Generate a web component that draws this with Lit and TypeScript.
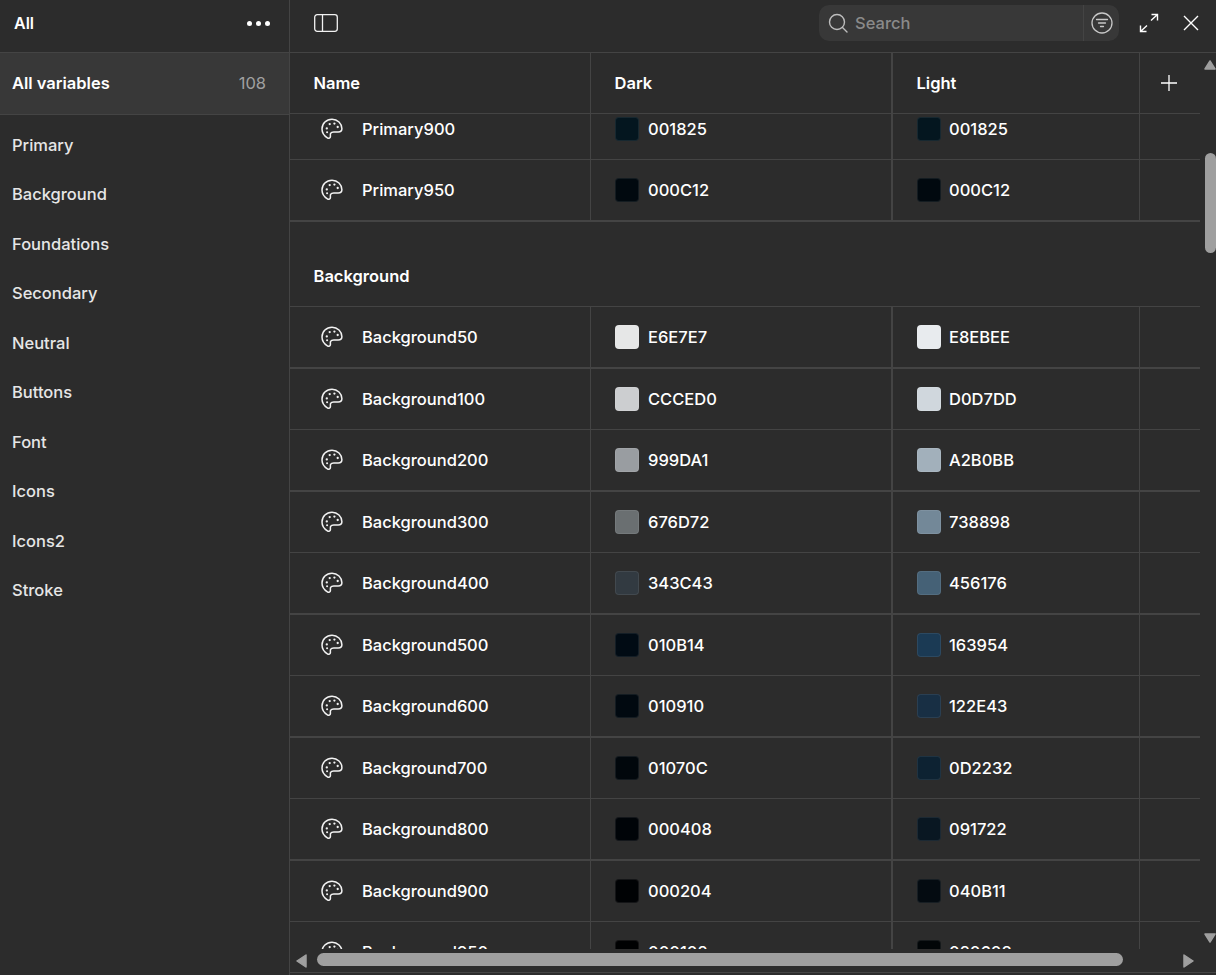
import { LitElement, html, css, svg } from "lit";
import { customElement } from "lit/decorators.js";

const palette = svg`<svg class="pal" width="24" height="24" viewBox="0 0 24 24" fill="none" stroke="#f2f2f2" stroke-width="1.5" stroke-linecap="round" stroke-linejoin="round"><path d="M12 2.2C6.4 2.2 2 6.6 2 12c0 3.600 2.400 7 5.400 8.900 1.400.9 2.900.2 3-1.300.1-1.200-.3-2.300.2-3.300.6-1.100 1.800-1.400 3.200-1.400h4.400c2 0 3.700-1.100 3.700-3.200C21.900 6.500 17.500 2.200 12 2.200Z"/><g fill="#f2f2f2" stroke="none"><circle cx="6.800" cy="11.400" r="1.150"/><circle cx="9.700" cy="7.100" r="1.150"/><circle cx="14.400" cy="6.600" r="1.150"/><circle cx="17.700" cy="10" r="1.150"/><circle cx="7.100" cy="15.300" r="1.050"/></g></svg>`;

interface Row { name: string; dark: string; light: string; thick?: boolean; h: number }

const rows: Row[] = [
  { name: "Background50", dark: "E6E7E7", light: "E8EBEE", thick: true, h: 62 },
  { name: "Background100", dark: "CCCED0", light: "D0D7DD", h: 61 },
  { name: "Background200", dark: "999DA1", light: "A2B0BB", thick: true, h: 62 },
  { name: "Background300", dark: "676D72", light: "738898", h: 61 },
  { name: "Background400", dark: "343C43", light: "456176", thick: true, h: 62 },
  { name: "Background500", dark: "010B14", light: "163954", h: 61 },
  { name: "Background600", dark: "010910", light: "122E43", thick: true, h: 62 },
  { name: "Background700", dark: "01070C", light: "0D2232", h: 61 },
  { name: "Background800", dark: "000408", light: "091722", thick: true, h: 62 },
  { name: "Background900", dark: "000204", light: "040B11", h: 61 },
  { name: "Background950", dark: "000102", light: "020608", h: 61 },
];

/* Colours as the reference actually paints them, where they differ from the label. */
const shown: Record<string, string> = {
  "001825": "04161f",
  "000C12": "01090f",
  "676D72": "6a6f71",
  "343C43": "323a41",
  "163954": "1b3a54",
  "122E43": "182f44",
};

const groups = ["Primary", "Background", "Foundations", "Secondary", "Neutral", "Buttons", "Font", "Icons", "Icons2", "Stroke"];

@customElement("app-root")
export class AppRoot extends LitElement {
  static styles = css`
    :host {
      display: block;
      width: 1216px;
      height: 975px;
      overflow: hidden;
      background: #2c2c2c;
      color: #fff;
      font-family: Inter, "Liberation Sans", sans-serif;
      font-size: 16.5px;
    }
    .app { display: grid; grid-template-columns: 290px 1fr; height: 975px; }
    .side { border-right: 1px solid #444; display: flex; flex-direction: column; }
    .side-head {
      border-bottom: 1px solid #444;
      display: flex; align-items: center; justify-content: space-between;
      padding: 0 19px 6px 14px; box-sizing: border-box; height: 53px;
      font-weight: 600; font-size: 16px;
    }
    .dots { display: flex; gap: 4px; }
    .dots i { width: 5px; height: 5px; border-radius: 50%; background: #fff; display: block; }
    .all {
      height: 62px; box-sizing: border-box; background: #383838; border-bottom: 1px solid #444;
      display: flex; align-items: center; justify-content: space-between; padding: 0 23px 1px 12px;
      font-weight: 600;
    }
    .all span { font-weight: 400; color: #a0a0a0; }
    .groups { list-style: none; margin: 0; padding: 5.5px 12px 0; }
    .groups li { height: 49.5px; line-height: 49.5px; color: #e6e6e6; font-weight: 500; }

    .main { display: flex; flex-direction: column; min-width: 0; height: 975px; }
    .top {
      height: 53px; box-sizing: border-box; border-bottom: 1px solid #444; flex: none;
      display: flex; align-items: center; padding: 0 17px 6px 24px;
    }
    .search {
      margin-left: auto; width: 300px; height: 36px; border-radius: 10px; background: #383838;
      display: flex; align-items: center; box-sizing: border-box; padding-left: 9px; gap: 7px;
      color: #8a8a8a; font-weight: 500;
    }
    .search .txt { flex: 1; }
    .filter { width: 36px; height: 36px; border-left: 1px solid #444; display: flex; align-items: center; justify-content: center; box-sizing: border-box; }
    .expand { margin-left: 20px; }
    .close { margin-left: 24px; }
    svg { display: block; flex: none; }

    .body { flex: 1; display: grid; grid-template-columns: 1fr 16px; grid-template-rows: 896px 26px; min-height: 0; }
    .table { overflow: hidden; display: flex; flex-direction: column; min-height: 0; }
    .cols { display: grid; grid-template-columns: 301px 302px 247px 60px; }
    .thead { height: 61px; box-sizing: border-box; border-bottom: 1px solid #444; flex: none; font-weight: 600; }
    .thead > div { display: flex; align-items: center; padding-left: 23.5px; box-sizing: border-box; height: 60px; }
    .c { border-right: 1px solid #444; box-sizing: border-box; }
    .c2 { border-right-width: 2px; }
    .c4 { border-right: 0; }
    .thead .c4 { padding-left: 20px; }
    .scroll { flex: 1; overflow: hidden; min-height: 0; }
    .inner { margin-top: -15px; }
    .row { box-sizing: border-box; border-bottom: 1px solid #444; font-weight: 500; }
    .row.thick { border-bottom: 2px solid #444; }
    .row > div { display: flex; align-items: center; height: 100%; box-sizing: border-box; }
    .name { padding-left: 30px; gap: 18px; }
    .val { padding-left: 24px; gap: 9px; }
    .c3 { gap: 8px; }
    .sw { width: 24px; height: 24px; border-radius: 4px; box-sizing: border-box; border: 1px solid rgba(255,255,255,0.08); flex: none; }
    .group { height: 85px; box-sizing: border-box; border-bottom: 1px solid #444; display: flex; align-items: flex-end; padding: 0 0 20px 23.5px; font-weight: 600; }

    .vbar { display: flex; flex-direction: column; align-items: flex-end; grid-row: 1; grid-column: 2; }
    .thumb-v { width: 11px; height: 100px; background: #9f9f9f; border-radius: 6px; margin-top: 83px; }
    .up { margin-top: 7px; }
    .down { margin-top: auto; margin-bottom: 6px; }
    .hbar { grid-row: 2; grid-column: 1 / 3; display: flex; align-items: flex-start; padding-top: 4px; height: 19px; border-bottom: 1px solid #444; }
    .thumb-h { width: 806px; height: 13px; background: #9f9f9f; border-radius: 7px; margin-left: 10px; }
    .al { margin-left: 6px; margin-top: 1px; }
    .ar { margin-left: 60px; margin-top: 1px; }
  `;

  private swatch(c: string) {
    return html`<span class="sw" style="background:#${shown[c] ?? c}"></span>`;
  }

  private row(r: Row) {
    return html`<div class="row cols ${r.thick ? "thick" : ""}" style="height:${r.h}px">
      <div class="c name">${palette}<span>${r.name}</span></div>
      <div class="c c2 val">${this.swatch(r.dark)}<span>${r.dark}</span></div>
      <div class="c val c3">${this.swatch(r.light)}<span>${r.light}</span></div>
      <div class="c4"></div>
    </div>`;
  }

  render() {
    return html`<div class="app">
      <aside class="side">
        <div class="side-head"><span>All</span><span class="dots"><i></i><i></i><i></i></span></div>
        <div class="all">All variables<span>108</span></div>
        <ul class="groups">${groups.map((g) => html`<li>${g}</li>`)}</ul>
      </aside>
      <main class="main">
        <div class="top">
          <svg width="24" height="18" viewBox="0 0 24 18" fill="none" stroke="#f2f2f2" stroke-width="1.300"><rect x=".7" y=".7" width="22.600" height="16.600" rx="2.500"/><path d="M8.500 1v16"/></svg>
          <div class="search">
            <svg width="20" height="20" viewBox="0 0 20 20" fill="none" stroke="#bdbdbd" stroke-width="1.400" stroke-linecap="round"><circle cx="9" cy="9" r="7.500"/><path d="m14.500 14.500 4.500 4.500"/></svg>
            <span class="txt">Search</span>
            <div class="filter"><svg width="22" height="22" viewBox="0 0 22 22" fill="none" stroke="#c8c8c8" stroke-width="1.300" stroke-linecap="round"><circle cx="11" cy="11" r="10"/><path d="M5.500 7.500h11M7.500 11h7M9.500 14.500h3"/></svg></div>
          </div>
          <svg class="expand" width="20" height="20" viewBox="0 0 20 20" fill="none" stroke="#fff" stroke-width="1.400"><path d="M12.500 1.500h6v6M18.500 1.500l-6.500 6M1.500 12.500v6h6M1.500 18.500l6.500-6"/></svg>
          <svg class="close" width="16" height="16" viewBox="0 0 16 16" fill="none" stroke="#fff" stroke-width="1.400"><path d="m1 1 14 14M15 1 1 15"/></svg>
        </div>
        <div class="body">
          <div class="table">
            <div class="thead cols">
              <div class="c">Name</div>
              <div class="c c2">Dark</div>
              <div class="c">Light</div>
              <div class="c4"><svg width="18" height="18" viewBox="0 0 18 18" stroke="#fff" stroke-width="1.300"><path d="M9 1v16M1 9h16"/></svg></div>
            </div>
            <div class="scroll"><div class="inner">
              ${this.row({ name: "Primary900", dark: "001825", light: "001825", h: 61 })}
              ${this.row({ name: "Primary950", dark: "000C12", light: "000C12", thick: true, h: 62 })}
              <div class="group">Background</div>
              ${rows.map((r) => this.row(r))}
            </div></div>
          </div>
          <div class="vbar">
            <svg class="up" width="12" height="10" viewBox="0 0 12 10"><path d="M6 1 11 9H1Z" fill="#9f9f9f" stroke="#9f9f9f" stroke-width="1.500" stroke-linejoin="round"/></svg>
            <div class="thumb-v"></div>
            <svg class="down" width="12" height="10" viewBox="0 0 12 10"><path d="M6 9 11 1H1Z" fill="#9f9f9f" stroke="#9f9f9f" stroke-width="1.500" stroke-linejoin="round"/></svg>
          </div>
          <div class="hbar">
            <svg class="al" width="11" height="14" viewBox="0 0 11 14"><path d="M1 7 10 1V13Z" fill="#9f9f9f" stroke="#9f9f9f" stroke-width="1.500" stroke-linejoin="round"/></svg>
            <div class="thumb-h"></div>
            <svg class="ar" width="11" height="14" viewBox="0 0 11 14"><path d="M10 7 1 1V13Z" fill="#9f9f9f" stroke="#9f9f9f" stroke-width="1.500" stroke-linejoin="round"/></svg>
          </div>
        </div>
      </main>
    </div>`;
  }
}
